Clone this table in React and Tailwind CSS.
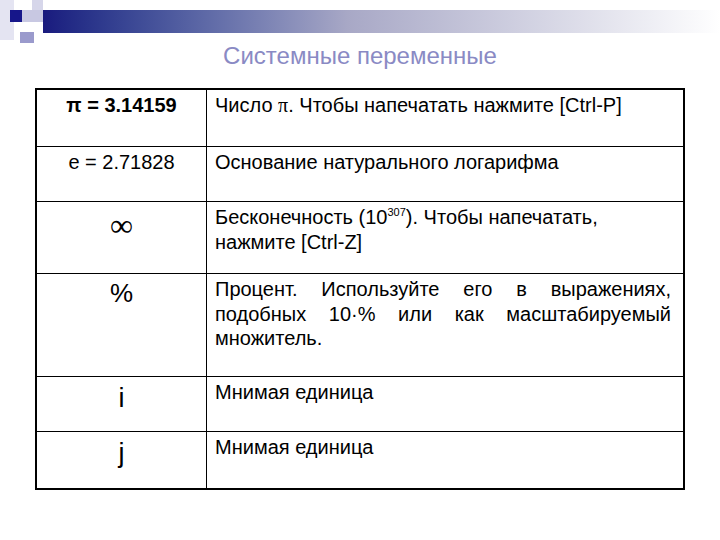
import React from "react";

const rows = [
  {
    sym: <span className="font-bold">π = 3.14159</span>,
    text: (
      <>
        Число <span className="font-['Liberation_Serif']">π</span>. Чтобы напечатать нажмите [Ctrl-P]
      </>
    ),
    h: "h-[56px]",
  },
  {
    sym: <span>e = 2.71828</span>,
    text: <>Основание натурального логарифма</>,
    h: "h-[55px]",
  },
  {
    sym: (
      <span className="mt-[8px] text-[32px] leading-[24px] font-['Liberation_Serif'] font-light">
        ∞
      </span>
    ),
    text: (
      <>
        Бесконечность (10<span className="inline-block align-top text-[11px] leading-[14px]">307</span>). Чтобы напечатать, нажмите [Ctrl-Z]
      </>
    ),
    h: "h-[72px]",
  },
  {
    sym: <span className="mt-[3px] text-[26px] leading-[26px]">%</span>,
    text: (
      <>
        Процент. Используйте его в выражениях, подобных 10·% или как масштабируемый множитель.
      </>
    ),
    h: "h-[103px]",
    justify: true,
  },
  {
    sym: <span className="mt-[3px] text-[27px] leading-[30px]">i</span>,
    text: <>Мнимая единица</>,
    h: "h-[55px]",
  },
  {
    sym: <span className="mt-[3px] text-[27px] leading-[30px]">j</span>,
    text: <>Мнимая единица</>,
    h: "h-[57px]",
  },
];

// slide template decoration: squares + fading bar
const Header = () => (
  <div className="flex items-start h-[44px]">
    <svg width="43" height="44" viewBox="0 0 43 44" className="shrink-0">
      <rect x="0" y="0" width="14" height="40" fill="#e4e4f2" />
      <rect x="32" y="0" width="11" height="22" fill="#d6d6ea" />
      <rect x="22" y="10" width="21" height="12" fill="#c8c8e2" />
      <rect x="20" y="32" width="14" height="11" fill="#9a9acc" />
      <rect x="10" y="10" width="12" height="12" fill="#16168a" />
    </svg>
    <div className="mt-[10px] h-[23px] flex-1 bg-gradient-to-r from-[#1a1a7e] via-[#a8a8c6] via-45% to-white" />
  </div>
);

export default function App() {
  return (
    <div className="w-[720px] h-[540px] bg-white overflow-hidden font-['Liberation_Sans',Arial,sans-serif] text-black">
      <Header />
      <h1 className="text-center text-[24px] text-[#8a8ac4] leading-none">
        Системные переменные
      </h1>
      <div className="ml-[35px] mt-[20px] w-[650px] border-2 border-black">
        {rows.map((r, i) => (
          <div
            key={i}
            className={`flex ${r.h} ${i > 0 ? "border-t border-black" : ""}`}
          >
            <div className="w-[170px] shrink-0 border-r border-black flex items-start justify-center pt-[3px] text-[20px] leading-[24.5px]">
              {r.sym}
            </div>
            <div
              className={`flex-1 pl-[8px] pr-[12px] pt-[3px] text-[20px] leading-[24.5px] ${
                r.justify ? "text-justify" : ""
              }`}
            >
              {r.text}
            </div>
          </div>
        ))}
      </div>
    </div>
  );
}
